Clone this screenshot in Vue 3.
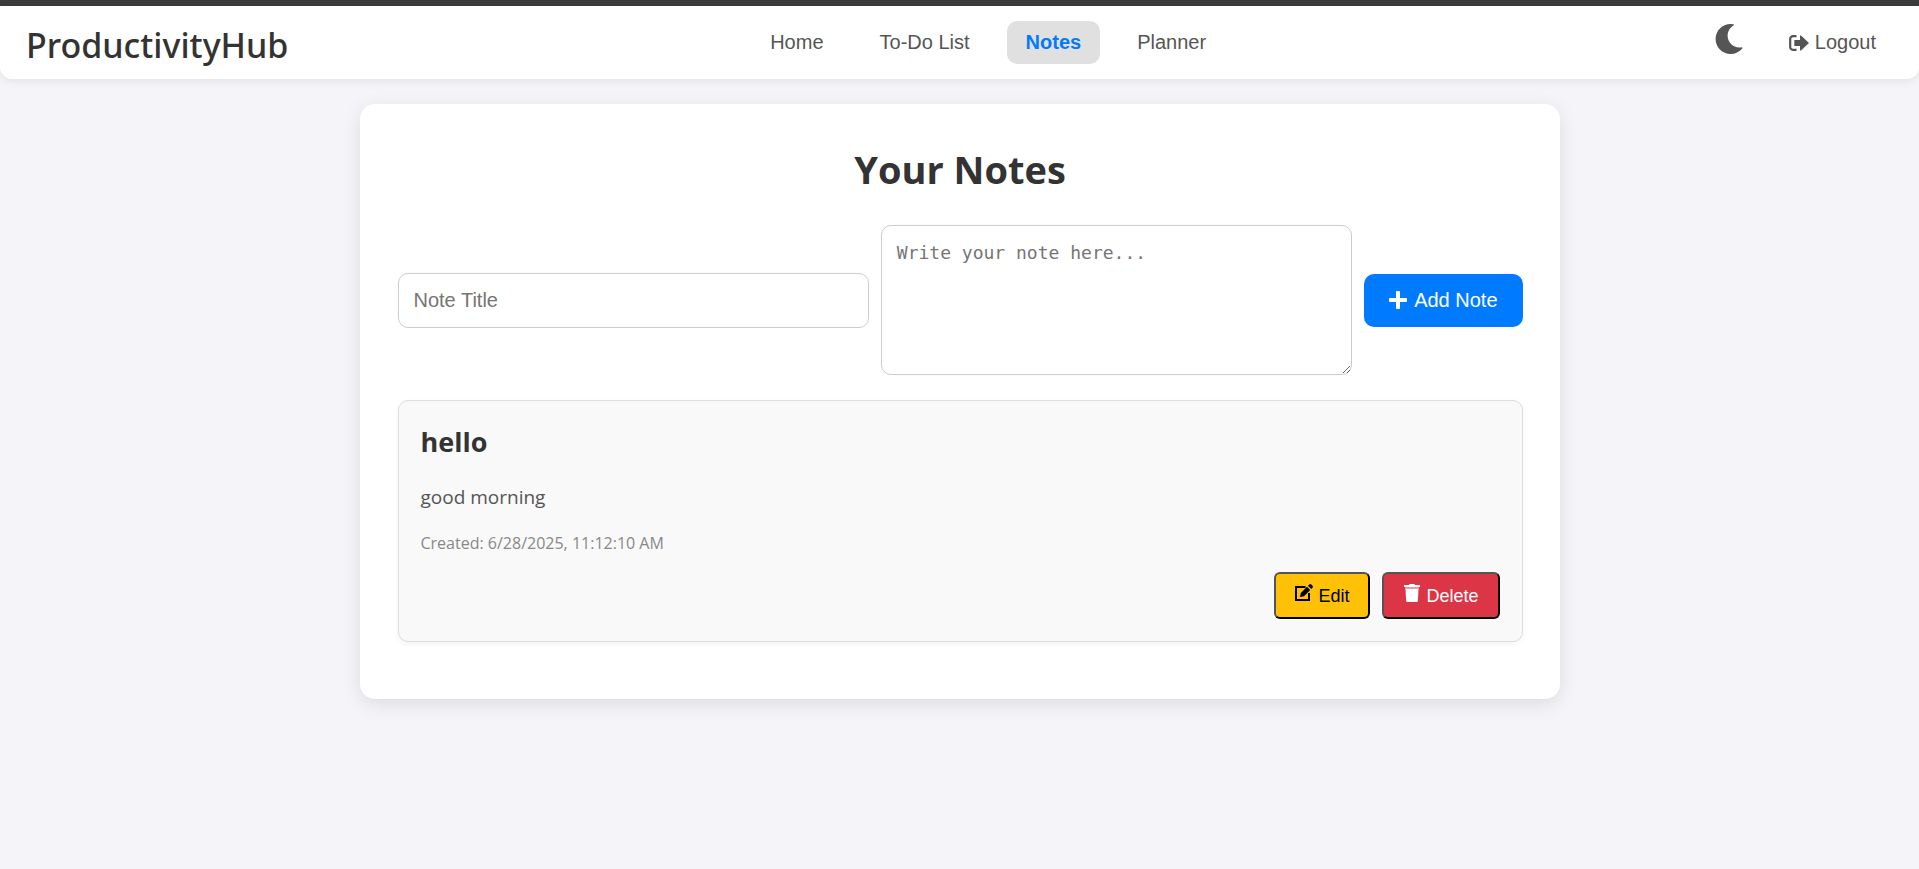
<script setup>
import { ref } from 'vue'

const links = [
  { label: 'Home', active: false },
  { label: 'To-Do List', active: false },
  { label: 'Notes', active: true },
  { label: 'Planner', active: false },
]
const title = ref('')
const body = ref('')
const notes = ref([
  { id: 1, title: 'hello', body: 'good morning', created: '6/28/2025, 11:12:10 AM' },
])
</script>

<template>
  <div class="page">
    <header class="navbar">
      <div class="brand">ProductivityHub</div>
      <nav class="links">
        <a v-for="l in links" :key="l.label" href="#" class="link" :class="{ active: l.active }">{{ l.label }}</a>
      </nav>
      <div class="actions">
        <button class="theme" type="button" aria-label="Toggle dark mode">
          <svg viewBox="0 0 512 512" width="30" height="30" fill="currentColor"><path d="M283.211 512c78.962 0 151.079-35.925 198.857-94.792 7.068-8.708-.639-21.43-11.562-19.35-124.203 23.654-238.262-71.576-238.262-196.954 0-72.222 38.662-138.635 101.498-174.394 9.686-5.512 7.25-20.197-3.756-22.23A258.156 258.156 0 0 0 283.211 0c-141.309 0-256 114.511-256 256 0 141.309 114.511 256 256 256z" /></svg>
        </button>
        <a href="#" class="link logout">
          <svg viewBox="0 0 20 20" width="20" height="20" fill="none"><path d="M7.500 3.200H4A2.700 2.700 0 0 0 1.200 6v8A2.700 2.700 0 0 0 4 16.800h3.500" stroke="currentColor" stroke-width="2.200" /><path d="M5.300 7H11V2.500h1L20 10l-8 7.500h-1V13H5.300z" fill="currentColor" /></svg>
          Logout
        </a>
      </div>
    </header>

    <main class="card">
      <h1>Your Notes</h1>
      <form class="form" @submit.prevent>
        <input v-model="title" class="field" type="text" placeholder="Note Title" aria-label="Note Title">
        <textarea v-model="body" class="field area" placeholder="Write your note here..." aria-label="Note text"></textarea>
        <button class="add" type="submit">
          <svg viewBox="0 0 18 18" width="18" height="18" fill="currentColor"><path d="M8 0h2a1 1 0 0 1 1 1v6h6a1 1 0 0 1 1 1v2a1 1 0 0 1-1 1h-6v6a1 1 0 0 1-1 1H8a1 1 0 0 1-1-1v-6H1a1 1 0 0 1-1-1V8a1 1 0 0 1 1-1h6V1a1 1 0 0 1 1-1z" /></svg>
          Add Note
        </button>
      </form>

      <article v-for="n in notes" :key="n.id" class="note">
        <h2>{{ n.title }}</h2>
        <p class="text">{{ n.body }}</p>
        <p class="date">Created: {{ n.created }}</p>
        <div class="buttons">
          <button class="btn edit" type="button">
            <svg viewBox="0 0 18 18" width="18" height="18"><path d="M10.500 3H1v13h13V9" fill="none" stroke="currentColor" stroke-width="2" /><path d="M5 13l.8-4L12 2.700 15.200 6 9 12.200zM13 1.800l1.300-1.300a1.500 1.500 0 0 1 2 0l1.200 1.200a1.500 1.500 0 0 1 0 2L16.200 5z" fill="currentColor" /></svg>
            Edit
          </button>
          <button class="btn delete" type="button">
            <svg viewBox="0 0 18 18" width="18" height="18" fill="currentColor"><path d="M1 1h5l.6-1h4.800L12 1h5v2H1z" /><path d="M2 3h14v2H2z" opacity=".5" /><path d="M2.500 5h13l-.6 11.500a1.500 1.500 0 0 1-1.500 1.500H4.600a1.500 1.500 0 0 1-1.500-1.500z" /></svg>
            Delete
          </button>
        </div>
      </article>
    </main>
  </div>
</template>

<style>
body {
  margin: 0;
  background: #f4f4f9;
}
</style>

<style scoped>
.page {
  min-height: 100vh;
  box-sizing: border-box;
  border-top: 6px solid #3c3c3c;
  font-family: "Segoe UI", "Open Sans", "Noto Sans", sans-serif;
  color: #333;
}
.navbar {
  display: flex;
  align-items: center;
  justify-content: space-between;
  height: 73px;
  padding: 0 24px;
  background: #fff;
  border-radius: 0 0 12px 12px;
  box-shadow: 0 2px 10px rgba(0, 0, 0, 0.08);
}
.brand {
  font-family: "Segoe UI", "Noto Sans", sans-serif;
  font-size: 34px;
  font-weight: 500;
  line-height: 48px;
  padding: 4px 0 0 2px;
}
.links {
  display: flex;
  gap: 18px;
}
.link {
  padding: 10px 19px;
  border-radius: 10px;
  font: 20px/23px "Liberation Sans", Arial, sans-serif;
  color: #555;
  text-decoration: none;
}
.link.active {
  background: #e0e0e0;
  color: #007bff;
  font-weight: 700;
}
.actions {
  display: flex;
  align-items: center;
}
.theme {
  display: flex;
  border: 0;
  padding: 0 26px 8px;
  background: none;
  color: #555;
}
.logout {
  display: flex;
  align-items: center;
  gap: 6px;
}
.card {
  box-sizing: border-box;
  max-width: 1200px;
  margin: 25px auto 0;
  padding: 38px 37px 57px 38px;
  background: #fff;
  border-radius: 15px;
  box-shadow: 0 5px 19px rgba(0, 0, 0, 0.1);
}
h1 {
  margin: 0 0 28px;
  font-size: 38px;
  line-height: 55px;
  text-align: center;
}
.form {
  display: flex;
  align-items: center;
  gap: 12px;
  margin-bottom: 25px;
}
.field {
  flex: 1;
  min-width: 0;
  box-sizing: border-box;
  padding: 15px;
  border: 1px solid #ccc;
  border-radius: 10px;
  background: #fff;
  font: 20px/23px "Liberation Sans", Arial, sans-serif;
}
.field::placeholder {
  color: #757575;
}
.area {
  height: 150px;
  font: 18px/24px "DejaVu Sans Mono", monospace;
  resize: vertical;
}
.add {
  display: flex;
  align-items: center;
  gap: 7px;
  padding: 15px 25px;
  border: 0;
  border-radius: 10px;
  background: #007bff;
  color: #fff;
  font: 20px/23px "Liberation Sans", Arial, sans-serif;
}
.note {
  padding: 22px;
  border: 1px solid #ddd;
  border-radius: 10px;
  background: #f9f9f9;
  box-shadow: 0 2px 6px rgba(0, 0, 0, 0.05);
}
h2 {
  margin: 0 0 20px;
  font-size: 27px;
  line-height: 38px;
}
.text {
  margin: 0 0 18px;
  font-size: 19px;
  line-height: 32px;
  color: #555;
}
.date {
  margin: 0 0 17px;
  font-size: 16px;
  line-height: 24px;
  color: #888;
}
.buttons {
  display: flex;
  justify-content: flex-end;
  gap: 12px;
}
.btn {
  display: flex;
  align-items: center;
  gap: 5px;
  height: 47px;
  padding: 0 19px;
  border: 2px outset #000;
  border-radius: 6px;
  font: 18px/20px "Liberation Sans", Arial, sans-serif;
}
.btn svg {
  margin-bottom: 5px;
}
.edit {
  background: #ffc107;
  color: #000;
}
.delete {
  background: #dc3545;
  color: #fff;
}
</style>
